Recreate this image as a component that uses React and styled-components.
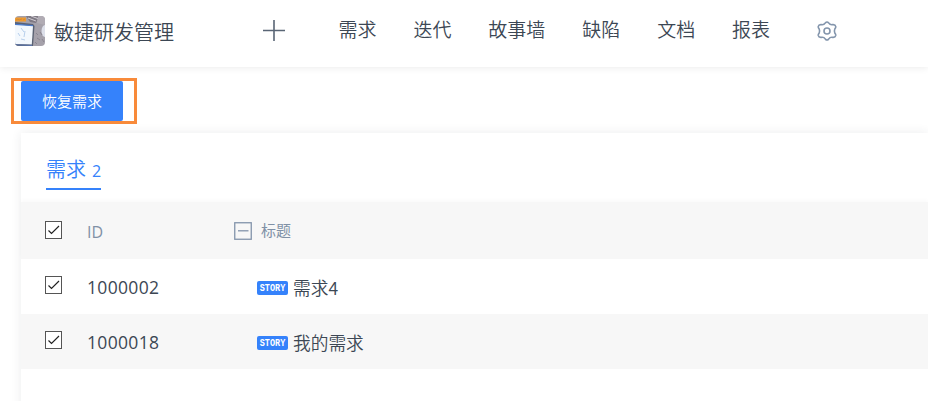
import styled, { createGlobalStyle } from "styled-components";

const navItems = ["需求", "迭代", "故事墙", "缺陷", "文档", "报表"];
const stories = [
  { id: "1000002", title: "需求4" },
  { id: "1000018", title: "我的需求" },
];

// project avatar
function Avatar() {
  return (
    <AvatarSvg viewBox="0 0 30 30">
      <rect width="30" height="30" fill="#a5a1aa" />
      <path d="M11 0H24L21 7L15 6Z" fill="#7f7a84" />
      <path d="M13 2L21 5M16 0L24 3" stroke="#d2cdd4" strokeWidth="1" />
      <path d="M23 0H30V9L22 7Z" fill="#b1acb4" />
      <path d="M0 6L18 8L19.5 10L18 30H0Z" fill="#5a6273" />
      <path d="M0 8L18 10L16.8 28.5L0 28Z" fill="#f3f8fd" />
      <path d="M0 8.3L18 9.7" stroke="#4a7acb" strokeWidth="1.3" />
      <path d="M6 12L9 16M3 17L5 20M10 15L9 21M6 23L10 24" stroke="#b7cfec" strokeWidth="1" />
      <path d="M0 28.8L17 29.4" stroke="#5c78b4" strokeWidth="1" />
      <rect y="1.5" width="11" height="4" fill="#f09a2c" />
      <path d="M1 4L3 3L4 4L7 3M8 4L10 3" stroke="#d08a38" fill="none" />
      <ellipse cx="30" cy="15" rx="3.5" ry="6" fill="#dde0ea" />
      <path d="M21 17l2 2m2-3l2 3m-5 3l3 2m2-1l2 3m-9 0l2 2" stroke="#8a8590" />
    </AvatarSvg>
  );
}

function Check() {
  return (
    <Checkbox>
      <svg width="15" height="16" viewBox="0 0 15 16" fill="none">
        <path d="M2.5 8.5L5.5 11.5L13 4" stroke="#222" strokeWidth="1.2" />
      </svg>
    </Checkbox>
  );
}

export default function App() {
  return (
    <>
      <GlobalStyle />
      <Page>
        <Header>
          <Avatar />
          <ProjectName>敏捷研发管理</ProjectName>
          <AddIcon viewBox="0 0 22 22">
            <path d="M11 0V21M0 10.5H22" stroke="#596575" strokeWidth="1.6" />
          </AddIcon>
          <Nav>
            {navItems.map((item) => (
              <NavItem key={item}>{item}</NavItem>
            ))}
          </Nav>
          <SettingsIcon viewBox="0 0 20 20">
            <path d="M8.4 1.9Q10 .1 11.6 1.9Q13.2 4.2 15.8 3.6Q18.3 3.4 18.8 5.6Q18.9 6.6 17.8 8Q17 10 17.8 12Q18.9 13.4 18.8 14.4Q18.3 16.6 15.8 16.4Q13.2 15.8 11.6 18.1Q10 19.9 8.4 18.1Q6.8 15.8 4.2 16.4Q1.7 16.6 1.2 14.4Q1.1 13.4 2.2 12Q3 10 2.2 8Q1.1 6.6 1.2 5.6Q1.7 3.4 4.2 3.6Q6.8 4.2 8.4 1.9Z" />
            <circle cx="10" cy="10" r="3" />
          </SettingsIcon>
        </Header>
        <Content>
          <Highlight>
            <RestoreButton>恢复需求</RestoreButton>
          </Highlight>
          <Panel>
            <TabBar>
              <Tab>
                需求<Count>2</Count>
              </Tab>
            </TabBar>
            <HeadRow>
              <Check />
              <HeadId>ID</HeadId>
              <HeadTitle>
                <svg width="18" height="18" viewBox="0 0 18 18" fill="none" stroke="#8293aa">
                  <rect x="0.75" y="0.75" width="16.5" height="16.5" strokeWidth="1.3" />
                  <path d="M4 8.8H14.5" strokeWidth="1.3" />
                </svg>
                <TitleLabel>标题</TitleLabel>
              </HeadTitle>
            </HeadRow>
            {stories.map((story, i) => (
              <Row key={story.id} $striped={i % 2 === 1}>
                <Check />
                <StoryId>{story.id}</StoryId>
                <Badge>
                  <BadgeText>STORY</BadgeText>
                </Badge>
                <StoryTitle>{story.title}</StoryTitle>
              </Row>
            ))}
          </Panel>
        </Content>
      </Page>
    </>
  );
}

const GlobalStyle = createGlobalStyle`
  * {
    box-sizing: border-box;
  }
  body {
    margin: 0;
    background: #fff;
    font-family: "Noto Sans", "Noto Sans CJK SC", sans-serif;
    color: #3c4754;
  }
`;
const Page = styled.div`
  height: 401px;
  display: flex;
  flex-direction: column;
  overflow: hidden;
`;
const Header = styled.header`
  display: flex;
  flex-shrink: 0;
  height: 67px;
  padding-left: 15px;
  box-shadow: 0 1px 7px rgba(0, 0, 0, 0.08);
`;
const AvatarSvg = styled.svg`
  width: 30px;
  height: 30px;
  margin-top: 16px;
  border-radius: 4px;
`;
const ProjectName = styled.div`
  width: 120px;
  margin: 17px 89px 0 9px;
  font: 350 20px/30px "Noto Sans CJK SC", sans-serif;
  white-space: nowrap;
`;
const AddIcon = styled.svg`
  width: 22px;
  height: 22px;
  margin-top: 20px;
`;
const Nav = styled.nav`
  display: flex;
  gap: 36.9px;
  margin: 14px 0 0 53.5px;
`;
const NavItem = styled.div`
  font: 350 19px/30px "Noto Sans CJK SC", sans-serif;
  white-space: nowrap;
`;
const SettingsIcon = styled.svg`
  width: 20px;
  height: 20px;
  margin: 21px 0 0 46.5px;
  fill: none;
  stroke: #8395ac;
  stroke-width: 1.6;
`;
const Content = styled.main`
  flex: 1;
  padding: 11px 0 0 11px;
`;
const Highlight = styled.div`
  width: 126px;
  height: 46px;
  padding-left: 7px;
  border: 3px solid #f88a3a;
`;
const RestoreButton = styled.button`
  display: block;
  width: 102px;
  height: 40px;
  padding: 0;
  border: 0;
  border-radius: 2px;
  background: #3582fb;
  color: #fff;
  font: 350 15px/40px "Noto Sans CJK SC", sans-serif;
`;
const Panel = styled.section`
  height: 290px;
  margin: 9px 0 0 10px;
  background: #fff;
  box-shadow: 0 0 10px rgba(40, 50, 70, 0.09);
`;
const TabBar = styled.div`
  display: flex;
  height: 69px;
  padding: 20px 0 0 25px;
`;
const Tab = styled.div`
  width: 55px;
  height: 37px;
  border-bottom: 2px solid #3582fb;
  color: #3582fb;
  font: 350 20px/32px "Noto Sans CJK SC", sans-serif;
  white-space: nowrap;
`;
const Count = styled.span`
  margin-left: 6px;
  font: 400 16px/20px "Open Sans", sans-serif;
`;
const Row = styled.div`
  display: flex;
  align-items: flex-start;
  height: 55px;
  padding: 17px 0 0 24px;
  background: ${(props) => (props.$striped ? "#f7f7f7" : "#fff")};
`;
const HeadRow = styled(Row)`
  height: 57px;
  padding-top: 19px;
  background: #f7f7f7;
  box-shadow: 0 -2px 4px rgba(0, 0, 0, 0.025);
  color: #8091a6;
`;
const Checkbox = styled.span`
  flex-shrink: 0;
  width: 17px;
  height: 18px;
  border: 1px solid #555;
  background: #fff;
  svg {
    display: block;
  }
`;
const HeadId = styled.div`
  width: 122px;
  margin: 1px 0 0 25px;
  font: 400 16px/20px "Open Sans", sans-serif;
`;
const HeadTitle = styled.div`
  display: flex;
  gap: 9px;
  padding: 1px 0 0 25px;
`;
const TitleLabel = styled.span`
  font: 400 15px/16px "Noto Sans CJK SC", sans-serif;
`;
const StoryId = styled.div`
  width: 145px;
  margin: 0 0 0 25px;
  font: 400 17.5px/22px "Open Sans", sans-serif;
  letter-spacing: 0.32px;
`;
const Badge = styled.span`
  display: flex;
  align-items: center;
  justify-content: center;
  width: 31px;
  height: 14px;
  margin: 5px 5px 0 25px;
  border-radius: 2px;
  background: #3582fb;
  color: #fff;
`;
const BadgeText = styled.span`
  font: 700 8.5px/14px "Liberation Mono", monospace;
  transform: scaleY(1.25);
`;
const StoryTitle = styled.div`
  font: 350 17.7px/23px "Noto Sans CJK SC", sans-serif;
`;
